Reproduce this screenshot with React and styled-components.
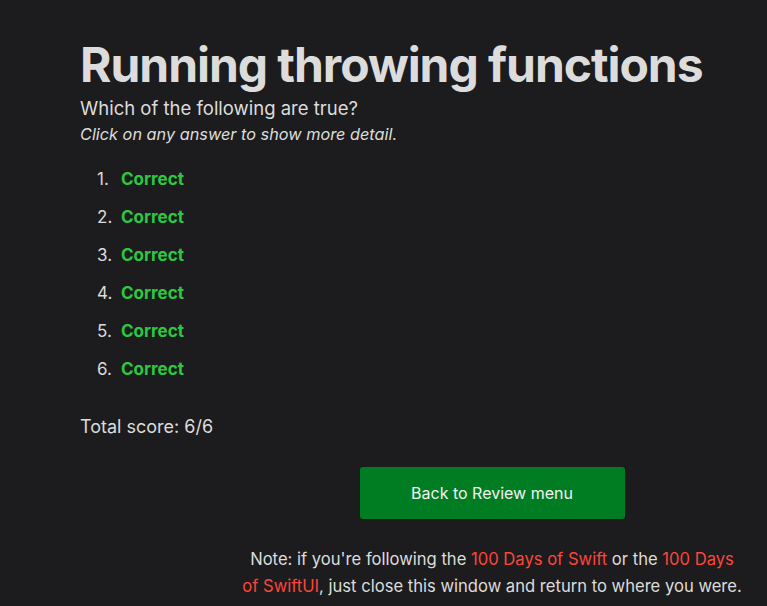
import React from 'react'
import styled, { createGlobalStyle } from 'styled-components'

const GlobalStyle = createGlobalStyle`
  html, body {
    margin: 0;
    padding: 0;
    background: #1c1c1e;
    overflow: hidden;
  }
  body {
    font-family: Inter, "Noto Sans", sans-serif;
    color: #dcdcdc;
    -webkit-font-smoothing: antialiased;
  }
`

const Page = styled.main`
  padding: 36px 0 0 80px;
`

const Title = styled.h1`
  margin: 0;
  font-size: 48px;
  font-weight: 700;
  line-height: 58px;
  letter-spacing: -1.05px;
  color: #dcdcdc;
`

const Question = styled.p`
  margin: 2px 0 0;
  font-size: 18.5px;
  line-height: 24px;
`

const Hint = styled.p`
  margin: 3px 0 0;
  font-size: 16.3px;
  font-style: italic;
  line-height: 22px;
`

const Answers = styled.ol`
  margin: 22px 0 0;
  padding: 0 0 0 17px;
  list-style: none;
  counter-reset: answer;
  font-size: 17px;
  line-height: 24px;
`

const Answer = styled.li`
  display: flex;
  margin-bottom: 14px;
  counter-increment: answer;

  &::before {
    content: counter(answer) ".";
    width: 24px;
    color: #dcdcdc;
  }
`

const Verdict = styled.span`
  color: #2bc940;
  font-weight: 700;
`

const Score = styled.p`
  margin: 34px 0 0;
  font-size: 18px;
  line-height: 24px;
`

const Footer = styled.div`
  display: flex;
  flex-direction: column;
  align-items: center;
  margin-top: 28px;
  padding-left: 137px;
`

const BackButton = styled.button`
  width: 265px;
  height: 52px;
  border: none;
  border-radius: 3px;
  background: #007d23;
  color: #f2f2f2;
  font-family: inherit;
  font-size: 16px;
  cursor: pointer;
`

const Note = styled.p`
  margin: 27px 0 0;
  max-width: 500px;
  text-align: center;
  font-size: 16.6px;
  line-height: 27px;
`

const NoteLink = styled.a`
  color: #ff453a;
  text-decoration: none;
`

const results = [1, 2, 3, 4, 5, 6]

export default function App() {
  return (
    <>
      <GlobalStyle />
      <Page>
        <Title>Running throwing functions</Title>
        <Question>Which of the following are true?</Question>
        <Hint>Click on any answer to show more detail.</Hint>
        <Answers>
          {results.map((n) => (
            <Answer key={n}>
              <Verdict>Correct</Verdict>
            </Answer>
          ))}
        </Answers>
        <Score>Total score: 6/6</Score>
        <Footer>
          <BackButton>Back to Review menu</BackButton>
          <Note>
            Note: if you're following the <NoteLink href="#">100 Days of Swift</NoteLink> or the{' '}
            <NoteLink href="#">100 Days of SwiftUI</NoteLink>, just close this window and return to where you were.
          </Note>
        </Footer>
      </Page>
    </>
  )
}
